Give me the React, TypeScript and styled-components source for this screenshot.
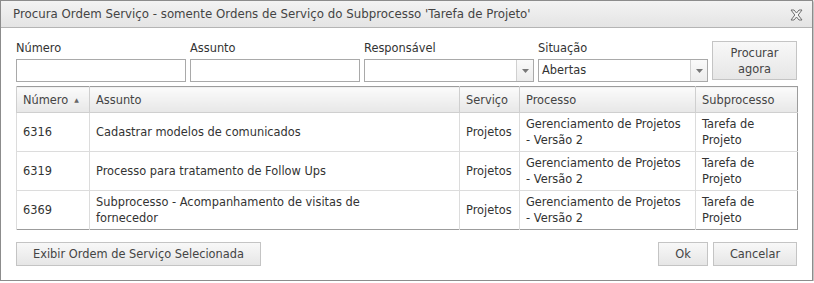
import React from "react";
import styled, { createGlobalStyle } from "styled-components";

const GlobalStyle = createGlobalStyle`
  html, body {
    margin: 0;
    padding: 0;
    background: #ffffff;
  }
  body {
    font-family: "DejaVu Sans", Verdana, sans-serif;
    font-size: 11.4px;
    color: #333333;
  }
`;

const rows = [
  { numero: "6316", assunto: ["Cadastrar modelos de comunicados"] },
  { numero: "6319", assunto: ["Processo para tratamento de Follow Ups"] },
  { numero: "6369", assunto: ["Subprocesso - Acompanhamento de visitas de", "fornecedor"] },
];

const columns = [
  { label: "Número", width: 73, sorted: true },
  { label: "Assunto", width: 370 },
  { label: "Serviço", width: 60 },
  { label: "Processo", width: 176 },
  { label: "Subprocesso", width: 102 },
];

const CloseIcon = () => (
  <svg width="13" height="12" viewBox="0 0 13 12">
    <path
      d="M1 1 H4 L6.5 4 L9 1 H12 L8.2 6 L12 11 H9 L6.5 8 L4 11 H1 L4.8 6 Z"
      fill="#f4f4f4"
      stroke="#6e6e6e"
      strokeWidth="1"
      strokeLinejoin="round"
    />
  </svg>
);

const Arrow = () => (
  <svg width="7" height="4" viewBox="0 0 7 4">
    <path d="M0 0 H7 L3.5 4 Z" fill="#777" />
  </svg>
);

const App = () => {
  return (
    <>
      <GlobalStyle />
      <Dialog>
        <TitleBar>
          <Title>Procura Ordem Serviço - somente Ordens de Serviço do Subprocesso 'Tarefa de Projeto'</Title>
          <CloseBtn><CloseIcon /></CloseBtn>
        </TitleBar>
        <Body>
          <Filters>
            <Field>
              <Label>Número</Label>
              <Input />
            </Field>
            <Field>
              <Label>Assunto</Label>
              <Input />
            </Field>
            <Field>
              <Label>Responsável</Label>
              <Select>
                <SelectValue />
                <SelectArrow><Arrow /></SelectArrow>
              </Select>
            </Field>
            <Field>
              <Label>Situação</Label>
              <Select>
                <SelectValue>Abertas</SelectValue>
                <SelectArrow><Arrow /></SelectArrow>
              </Select>
            </Field>
            <SearchButton>Procurar<br />agora</SearchButton>
          </Filters>

          <Table>
            <colgroup>
              {columns.map(c => <col key={c.label} style={{ width: c.width }} />)}
            </colgroup>
            <thead>
              <tr>
                {columns.map(c => (
                  <Th key={c.label}>
                    {c.label}
                    {c.sorted && <SortMark>▲</SortMark>}
                  </Th>
                ))}
              </tr>
            </thead>
            <tbody>
              {rows.map(r => (
                <tr key={r.numero}>
                  <Td>{r.numero}</Td>
                  <Td>
                    {r.assunto.map((line, i) => (
                      <React.Fragment key={i}>{i > 0 && <br />}{line}</React.Fragment>
                    ))}
                  </Td>
                  <Td>Projetos</Td>
                  <Td>Gerenciamento de Projetos<br />- Versão 2</Td>
                  <Td>Tarefa de<br />Projeto</Td>
                </tr>
              ))}
            </tbody>
          </Table>

          <Footer>
            <Button>Exibir Ordem de Serviço Selecionada</Button>
            <FooterRight>
              <Button $width={50}>Ok</Button>
              <Button $width={84}>Cancelar</Button>
            </FooterRight>
          </Footer>
        </Body>
      </Dialog>
    </>
  );
};

export default App;

const Dialog = styled.div`
  width: 811px;
  height: 279px;
  border: 1px solid #8c8c8c;
  box-shadow: 1px 1px 2px rgba(0, 0, 0, 0.35);
  background: #ffffff;
  display: flex;
  flex-direction: column;
`;

const TitleBar = styled.div`
  height: 26px;
  flex-shrink: 0;
  border-bottom: 1px solid #b4b4b4;
  background: linear-gradient(#f3f3f3, #e4e4e4);
  display: flex;
  align-items: center;
  padding: 0 9px 0 12px;
`;

const Title = styled.div`
  flex: 1;
  color: #444444;
  font-size: 11.8px;
  white-space: nowrap;
`;

const CloseBtn = styled.div`
  display: flex;
  align-items: center;
  padding-top: 2px;
`;

const Body = styled.div`
  padding: 13px 15px 0 15px;
  display: flex;
  flex-direction: column;
`;

const Filters = styled.div`
  display: grid;
  grid-template-columns: 170px 170px 170px 170px 85px;
  column-gap: 4px;
  align-items: end;
`;

const Field = styled.div`
  display: flex;
  flex-direction: column;
`;

const Label = styled.div`
  height: 18px;
  line-height: 14px;
  color: #333333;
`;

const Input = styled.div`
  height: 21px;
  border: 1px solid #a9a9a9;
  background: #ffffff;
`;

const Select = styled.div`
  height: 21px;
  border: 1px solid #a9a9a9;
  background: #ffffff;
  display: flex;
`;

const SelectValue = styled.div`
  flex: 1;
  padding-left: 3px;
  line-height: 21px;
  color: #333333;
`;

const SelectArrow = styled.div`
  width: 16px;
  border-left: 1px solid #d0d0d0;
  background: linear-gradient(#fafafa, #ececec);
  display: flex;
  align-items: center;
  justify-content: center;
`;

const SearchButton = styled.div`
  height: 37px;
  margin-bottom: 2px;
  border: 1px solid #c4c4c4;
  background: linear-gradient(#f8f8f8, #e6e6e6);
  color: #444444;
  text-align: center;
  line-height: 16px;
  display: flex;
  align-items: center;
  justify-content: center;
`;

const Table = styled.table`
  margin-top: 4px;
  width: 781px;
  border-collapse: collapse;
  table-layout: fixed;
  border: 1px solid #9c9c9c;
`;

const Th = styled.th`
  height: 25px;
  padding: 0 6px;
  text-align: left;
  font-weight: normal;
  color: #444444;
  background: linear-gradient(#fbfbfb, #e7e7e7);
  border-left: 1px solid #cfcfcf;
  border-bottom: 1px solid #cfcfcf;
  white-space: nowrap;
`;

const SortMark = styled.span`
  font-size: 6px;
  margin-left: 6px;
  vertical-align: 2px;
  color: #666;
`;

const Td = styled.td`
  height: 38px;
  padding: 0 6px;
  line-height: 16px;
  color: #333333;
  border-left: 1px solid #dcdcdc;
  border-top: 1px solid #dcdcdc;
  vertical-align: middle;
  white-space: nowrap;
  overflow: hidden;
`;

const Footer = styled.div`
  margin-top: 12px;
  display: flex;
  justify-content: space-between;
`;

const FooterRight = styled.div`
  display: flex;
  gap: 5px;
`;

const Button = styled.div<{ $width?: number }>`
  height: 24px;
  padding: 0 16px;
  width: ${p => (p.$width ? `${p.$width}px` : "auto")};
  box-sizing: border-box;
  border: 1px solid #c4c4c4;
  background: linear-gradient(#f8f8f8, #e6e6e6);
  color: #444444;
  display: flex;
  align-items: center;
  justify-content: center;
`;
